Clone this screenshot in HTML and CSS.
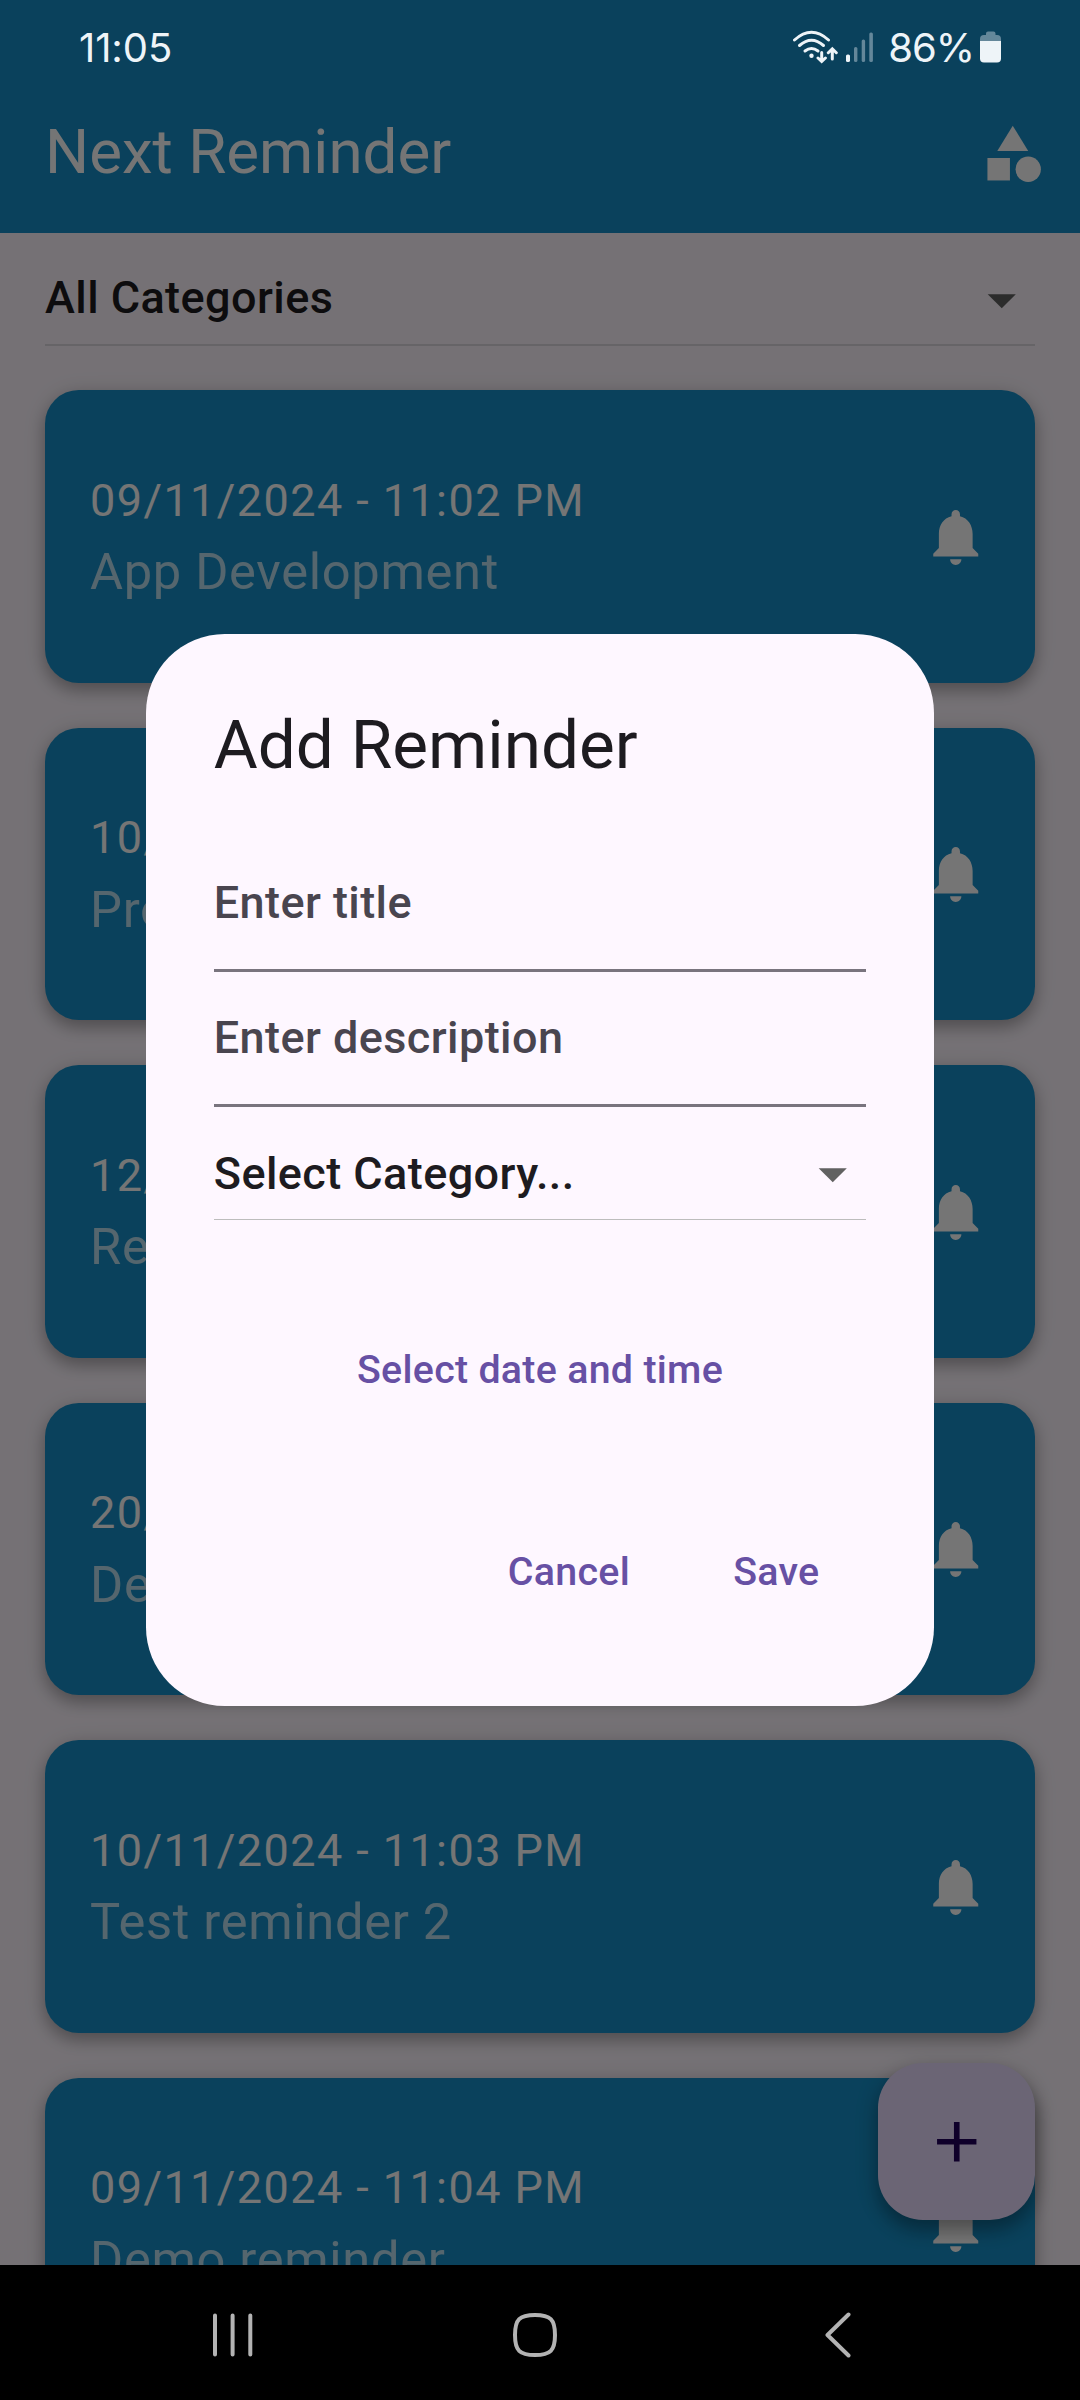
FILE: index.html
```html
<!DOCTYPE html>
<html lang="en">
<head>
<meta charset="utf-8">
<title>Next Reminder</title>
<link rel="stylesheet" href="styles.css">
</head>
<body>
<svg class="defs" width="0" height="0">
  <symbol id="bell" viewBox="0 0 24 24"><path d="M12 22c1.1 0 2-.9 2-2h-4c0 1.1.89 2 2 2zm6-6v-5c0-3.07-1.64-5.64-4.5-6.32V4c0-.83-.67-1.5-1.5-1.5s-1.5.67-1.5 1.5v.68C7.63 5.36 6 7.92 6 11v5l-2 2v1h16v-1l-2-2z"/></symbol>
  <symbol id="caret" viewBox="0 0 24 24"><path d="M7 10l5 5 5-5z"/></symbol>
</svg>
<div class="phone">
  <div class="app">
    <header class="appbar">
      <h1 class="appbar-title">Next Reminder</h1>
      <svg class="icon" viewBox="0 0 24 24"><path d="M12 2l-5.5 9h11z"/><circle cx="17.5" cy="17.5" r="4.5"/><path d="M3 13.5h8v8H3z"/></svg>
    </header>
    <div class="filter">
      <span class="filter-label">All Categories</span>
      <svg class="icon caret"><use href="#caret"/></svg>
    </div>
    <main class="list">
      <article class="card"><div class="card-text"><p class="date">09/11/2024 - 11:02 PM</p><p class="name">App Development</p></div><svg class="icon"><use href="#bell"/></svg></article>
      <article class="card"><div class="card-text"><p class="date">10/</p><p class="name">Pro</p></div><svg class="icon"><use href="#bell"/></svg></article>
      <article class="card"><div class="card-text"><p class="date">12/</p><p class="name">Re</p></div><svg class="icon"><use href="#bell"/></svg></article>
      <article class="card"><div class="card-text"><p class="date">20/</p><p class="name">De</p></div><svg class="icon"><use href="#bell"/></svg></article>
      <article class="card"><div class="card-text"><p class="date">10/11/2024 - 11:03 PM</p><p class="name">Test reminder 2</p></div><svg class="icon"><use href="#bell"/></svg></article>
      <article class="card"><div class="card-text"><p class="date">09/11/2024 - 11:04 PM</p><p class="name">Demo reminder</p></div><svg class="icon"><use href="#bell"/></svg></article>
    </main>
    <button class="fab"><svg class="icon" viewBox="0 0 24 24"><path d="M19 13h-6v6h-2v-6H5v-2h6V5h2v6h6z"/></svg></button>
  </div>

  <div class="scrim">
    <section class="dialog">
      <h2 class="dialog-title">Add Reminder</h2>
      <div class="field">Enter title</div>
      <div class="field">Enter description</div>
      <div class="select"><span>Select Category...</span><svg class="icon caret"><use href="#caret"/></svg></div>
      <button class="btn btn-date">Select date and time</button>
      <div class="actions">
        <button class="btn">Cancel</button>
        <button class="btn">Save</button>
      </div>
    </section>
  </div>

  <div class="statusbar">
    <span class="clock">11:05</span>
    <div class="status-right">
      <svg class="wifi" width="46" height="36" viewBox="0 0 46 36">
        <g fill="none" stroke="#eef4f8" stroke-width="3" stroke-linecap="round">
          <path d="M2.500 11Q19.500-4.500 36.500 11"/>
          <path d="M7.500 16.500Q19.500 6 31.500 16.500"/>
          <path d="M13 22Q19.500 17 26 22"/>
          <path d="M29.700 23.500V32M26 29l3.700 3.500L33.400 29M40.300 30V20.500M36.300 23.700l4-3.900 4 3.900"/>
        </g>
        <circle cx="19.500" cy="26.700" r="2.200" fill="#eef4f8"/>
      </svg>
      <svg class="signal" width="28" height="32" viewBox="0 0 28 32">
        <rect x="0" y="23.500" width="4" height="7.500" rx="1.600" fill="#eef4f8"/>
        <g fill="#64879a"><rect x="8" y="16" width="3.400" height="15" rx="1.600"/><rect x="15.700" y="8.500" width="3.400" height="22.500" rx="1.600"/><rect x="23.300" y="1.500" width="3.600" height="29.500" rx="1.600"/></g>
      </svg>
      <span class="percent">86%</span>
      <svg class="battery" width="22" height="32" viewBox="0 0 22 32">
        <path fill="#64879a" d="M6 4V2.500Q6 .5 8 .5h5.500q2 0 2 2V4H17q4 0 4 4v3H0V8q0-4 4-4z"/>
        <path fill="#eef4f8" d="M0 10h21v17.500q0 4-4 4H4q-4 0-4-4z"/>
      </svg>
    </div>
  </div>

  <nav class="navbar">
    <svg width="40" height="44" viewBox="0 0 40 44"><path d="M2 2.500v39M19.600 2.500v39M37.300 2.500v39"/></svg>
    <svg class="home" width="44" height="44" viewBox="0 0 44 44"><path d="M22 2c15.500 0 20 4.500 20 20s-4.500 20-20 20S2 37.500 2 22 6.500 2 22 2z"/></svg>
    <svg width="26" height="46" viewBox="0 0 26 46"><path d="M23.500 2.500L2.500 23l21 20.500"/></svg>
  </nav>
</div>
</body>
</html>
```
FILE: styles.css
```css
* { box-sizing: border-box; }
body { margin: 0; background: #000; font-family: Roboto, "Liberation Sans", sans-serif; }
h1, h2, p { margin: 0; font-weight: 400; }
button { border: 0; margin: 0; padding: 0; background: none; font: inherit; }
.defs { position: absolute; }

.phone { position: relative; width: 1080px; height: 2400px; overflow: hidden; background: #000; }
.icon { display: block; flex: none; width: 67.5px; height: 67.5px; fill: #fff; }
.caret { fill: #616161; }

.app { position: relative; height: 2265px; overflow: hidden; background: #fef7ff; }
.appbar { height: 232.5px; padding: 75px 33.75px 0 45px; display: flex; align-items: center; justify-content: space-between; background: #168fc8; color: #fff; }
.appbar-title { font-size: 61.875px; line-height: 79px; padding-bottom: 3px; }

.filter { height: 113.5px; margin: 0 45px 44.25px; padding-top: 23.5px; display: flex; align-items: center; justify-content: space-between; border-bottom: 2px solid #dfdae1; color: #1d1b20; font-size: 45px; font-weight: 500; letter-spacing: .42px; }
.filter-label { padding-bottom: 5px; }

.list { display: flex; flex-direction: column; gap: 45px; padding: 0 45px; }
.card { flex: none; height: 292.5px; padding: 0 45.5px 0 45px; display: flex; align-items: center; justify-content: space-between; border-radius: 33.75px; background: #168fc8; box-shadow: 0 8px 15px rgba(0,0,0,.22), 0 3px 22px rgba(0,0,0,.15); }
.card-text { padding-top: 3px; }
.date { color: #fff; font-size: 45px; line-height: 67.5px; letter-spacing: 1.42px; }
.name { color: rgba(255,255,255,.7); font-size: 50.625px; line-height: 75px; letter-spacing: .7px; }

.fab { position: absolute; right: 45px; bottom: 45px; width: 157.5px; height: 157.5px; display: grid; place-items: center; border-radius: 45px; background: #eaddff; box-shadow: 0 11px 18px rgba(0,0,0,.26), 0 4px 24px rgba(0,0,0,.15); }
.fab .icon { fill: #21005d; }

.scrim { position: absolute; inset: 0 0 135px; padding-top: 75px; display: flex; align-items: center; justify-content: center; background: rgba(0,0,0,.54); }
.dialog { width: 787.5px; height: 1071.5px; padding: 66px 67.5px 67px; border-radius: 78.75px; background: #fef7ff; display: flex; flex-direction: column; color: #1d1b20; }
.dialog-title { font-size: 67.5px; line-height: 90px; margin-bottom: 46.5px; }
.field { height: 135px; border-bottom: 3px solid #79747e; display: flex; align-items: center; color: #49454f; font-size: 45px; font-weight: 500; letter-spacing: .42px; }
.select { height: 113px; padding-top: 22px; border-bottom: 1px solid #bdbdbd; display: flex; align-items: center; justify-content: space-between; font-size: 45px; font-weight: 500; letter-spacing: .42px; }
.btn { height: 135px; min-width: 180px; padding: 0 33.75px; color: #6750a4; font-size: 39.375px; font-weight: 500; letter-spacing: .28px; }
.btn-date { align-self: center; margin-top: 82px; }
.actions { display: flex; justify-content: flex-end; gap: 22.5px; margin-top: auto; }

.statusbar { position: absolute; top: 0; left: 0; right: 0; height: 94px; padding: 0 78px 0 79px; display: flex; align-items: center; justify-content: space-between; color: #eef4f8; font-family: Inter, sans-serif; font-size: 40px; }
.clock { letter-spacing: -.1px; }
.status-right { display: flex; align-items: center; }
.signal { margin-left: 8px; }
.percent { margin: 0 6px 0 14px; letter-spacing: -1px; }

.navbar { height: 135px; padding: 4px 229px 0 213px; display: flex; align-items: center; justify-content: space-between; }
.navbar svg { fill: none; stroke: #b3b3b3; stroke-width: 4; stroke-linecap: round; stroke-linejoin: round; }
.navbar .home { margin-right: 8px; }
```
